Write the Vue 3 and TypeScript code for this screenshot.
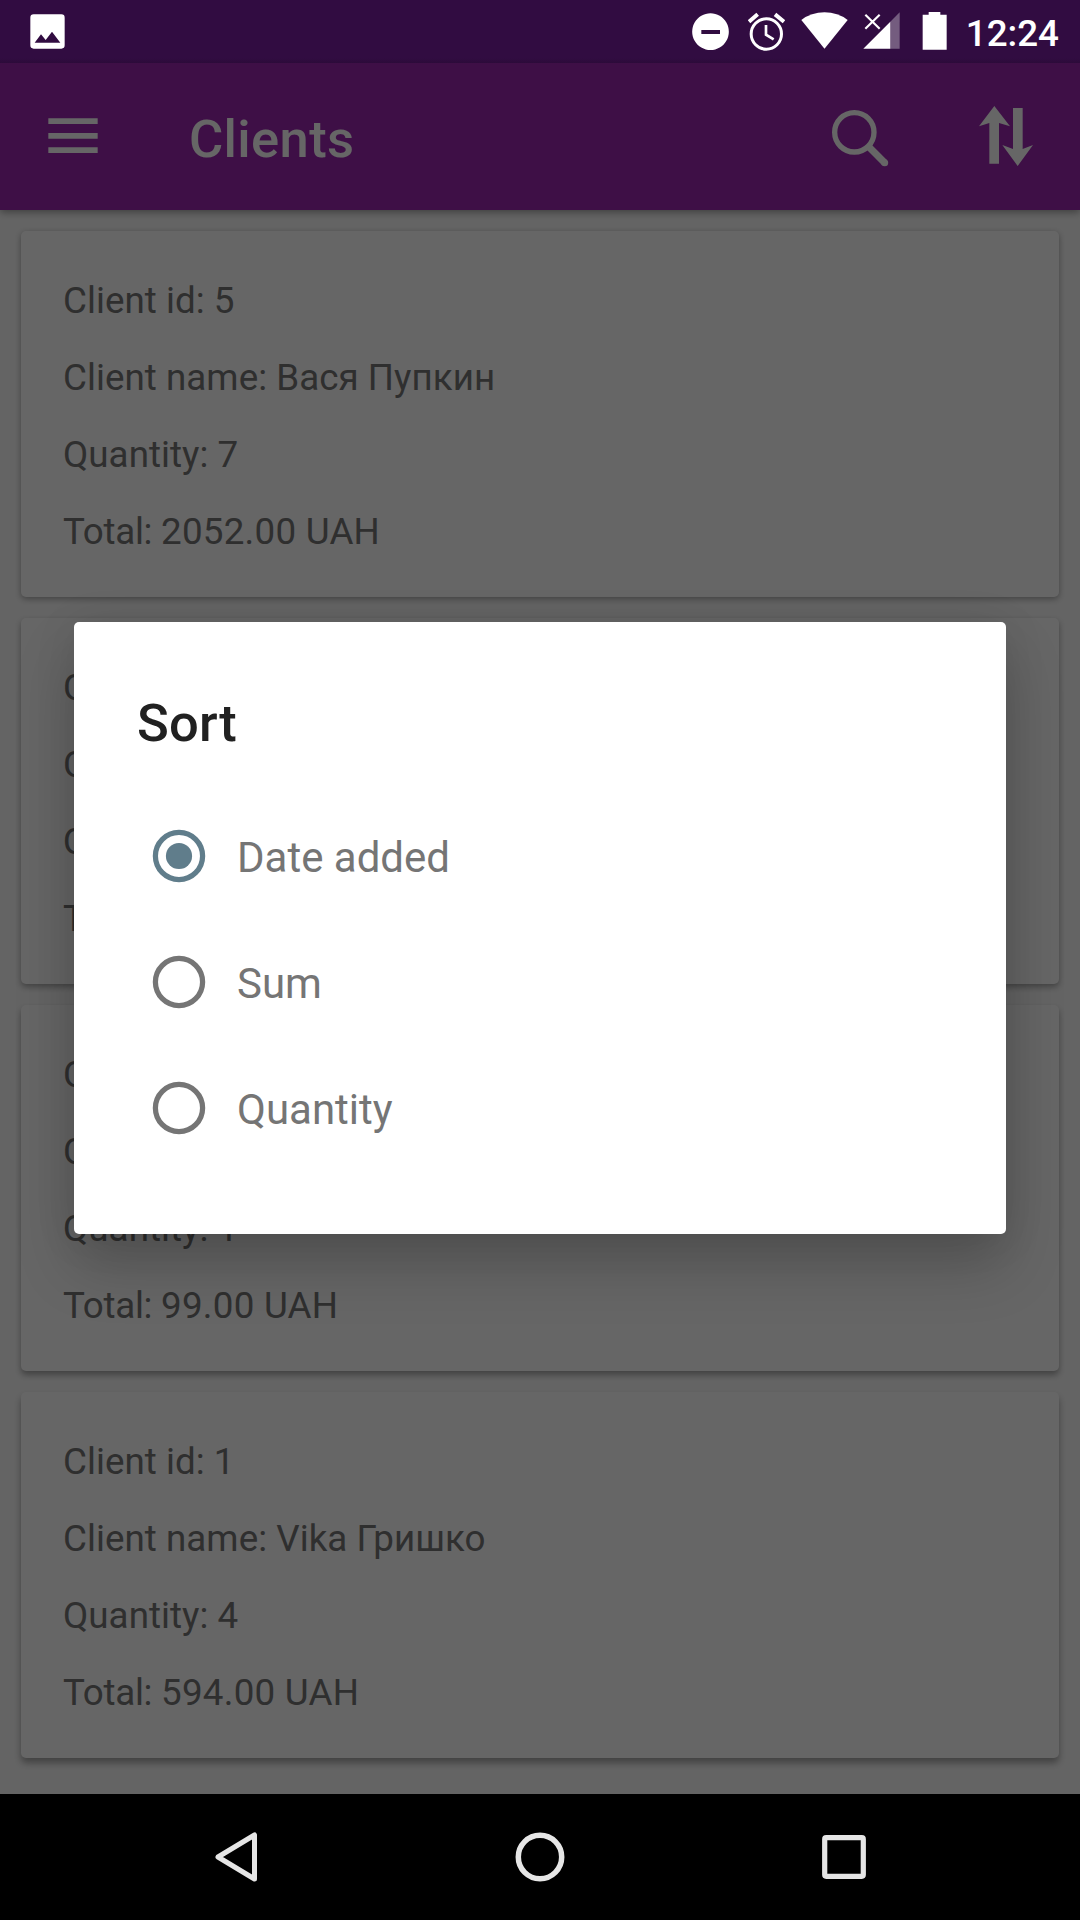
<script setup lang="ts">
import { ref } from 'vue'

interface Client {
  id: number
  name: string
  quantity: number
  total: string
}

const clients: Client[] = [
  { id: 5, name: 'Вася Пупкин', quantity: 7, total: '2052.00' },
  { id: 4, name: 'Client', quantity: 2, total: '198.00' },
  { id: 3, name: 'Client', quantity: 1, total: '99.00' },
  { id: 1, name: 'Vika Гришко', quantity: 4, total: '594.00' },
]

const sortOptions: string[] = ['Date added', 'Sum', 'Quantity']
const selected = ref('Date added')
</script>

<template>
  <div class="screen">
    <header class="status">
      <svg class="photo" width="35" height="35" viewBox="0 0 105 105">
        <path
          fill="#fff"
          fill-rule="evenodd"
          d="M11 1H94Q104 1 104 11V94Q104 104 94 104H11Q1 104 1 94V11Q1 1 11 1ZM14 86H91L66 53L47 78L33 61Z"
        />
      </svg>
      <div class="indicators">
        <svg width="37" height="38" viewBox="0 0 111 114">
          <path
            fill="#fff"
            fill-rule="evenodd"
            d="M55.500 1a55 55 0 1 0 .01 0ZM28 51H84V63H28Z"
          />
        </svg>
        <svg class="alarm" width="37" height="39" viewBox="0 0 111 117">
          <g fill="none" stroke="#fff">
            <circle cx="55" cy="66" r="45.500" stroke-width="9" />
            <path d="M54 39V68L77 82" stroke-width="8" />
            <path d="M3 29L29 7M81 7L108 29" stroke-width="12" />
          </g>
        </svg>
        <svg class="wifi" width="47" height="37" viewBox="0 0 141 111">
          <path fill="#fff" d="M1 24Q31 1 70.500 1T140 24L70.500 110Z" />
        </svg>
        <svg class="signal" width="37" height="37" viewBox="0 0 111 111">
          <path fill="#fff" fill-opacity=".33" d="M110 1V110H82V29Z" />
          <path fill="#fff" d="M82 29V110H1Z" />
          <path d="M7 8L50 50M50 8L7 50" fill="none" stroke="#fff" stroke-width="6.500" />
        </svg>
        <svg class="battery" width="25" height="38" viewBox="0 0 75 114">
          <path fill="#fff" d="M2 8H20V0H55V8H74V113H2Z" />
        </svg>
        <span class="clock">12:24</span>
      </div>
    </header>

    <div class="appbar">
      <svg width="50" height="37" viewBox="0 0 150 111">
        <path fill="#fff" d="M1 4H149V21H1ZM1 48H149V65H1ZM1 91H149V108H1Z" />
      </svg>
      <h1>Clients</h1>
      <svg class="search" width="57" height="57" viewBox="0 0 171 171">
        <g fill="none" stroke="#fff">
          <circle cx="67" cy="67" r="59" stroke-width="16" />
          <path d="M111 111L158 158" stroke-width="21" />
          <path d="M158 158h.1" stroke-width="21" stroke-linecap="round" />
        </g>
      </svg>
      <svg class="swap" width="54" height="60" viewBox="0 0 162 180">
        <path fill="#fff" d="M46 0L93 61L60 51V173H31V51L0 61Z" />
        <path fill="#fff" d="M116 180L162 117L131 129V6H102V129L70 117Z" />
      </svg>
    </div>

    <main class="list">
      <article v-for="(client, i) in clients" :key="client.id" class="card" :class="'depth-' + i">
        <p>Client id: {{ client.id }}</p>
        <p>Client name: {{ client.name }}</p>
        <p>Quantity: {{ client.quantity }}</p>
        <p><span class="label">Total: </span><span class="amount">{{ client.total }} UAH</span></p>
      </article>
    </main>

    <nav class="navbar">
      <svg class="back" width="43" height="50" viewBox="0 0 43 50">
        <path
          d="M3 25L39.500 3V47Z"
          fill="none"
          stroke="#e6e6e6"
          stroke-width="5"
          stroke-linejoin="round"
        />
      </svg>
      <svg width="50" height="50" viewBox="0 0 50 50">
        <circle cx="25" cy="25" r="21.700" fill="none" stroke="#e6e6e6" stroke-width="5.500" />
      </svg>
      <svg class="recents" width="44" height="44" viewBox="0 0 44 44">
        <rect
          x="2.700"
          y="2.700"
          width="38.600"
          height="38.600"
          rx="1.500"
          fill="none"
          stroke="#e6e6e6"
          stroke-width="5.200"
        />
      </svg>
    </nav>

    <div class="scrim">
      <section class="dialog" role="dialog">
        <h2>Sort</h2>
        <div
          v-for="option in sortOptions"
          :key="option"
          class="option"
          role="radio"
          :aria-checked="selected === option"
          @click="selected = option"
        >
          <svg
            width="54"
            height="54"
            viewBox="0 0 54 54"
            :class="{ checked: selected === option }"
          >
            <circle cx="27" cy="27" r="23.600" fill="none" stroke="currentColor" stroke-width="5.250" />
            <circle v-if="selected === option" cx="27" cy="27" r="13.100" fill="currentColor" />
          </svg>
          <span>{{ option }}</span>
        </div>
      </section>
    </div>
  </div>
</template>

<style>
body {
  margin: 0;
}
</style>

<style scoped>
.screen {
  position: relative;
  display: flex;
  flex-direction: column;
  width: 1080px;
  height: 1920px;
  overflow: hidden;
  background: #fafafa;
  font-family: Roboto, sans-serif;
}
svg {
  display: block;
  flex: none;
}
h1,
h2,
p {
  margin: 0;
}
.status {
  position: relative;
  z-index: 3;
  display: flex;
  flex: none;
  justify-content: space-between;
  box-sizing: border-box;
  height: 63px;
  padding: 0 21px 0 30px;
  background: linear-gradient(#310c41 58px, #2c0b3a);
}
.photo {
  margin-top: 14px;
}
.indicators {
  display: flex;
  align-items: flex-start;
  padding-top: 12px;
}
.indicators > svg:first-child {
  margin-top: 1px;
}
.alarm {
  margin-left: 19px;
}
.wifi {
  margin-left: 16px;
}
.signal {
  margin-left: 15px;
}
.battery {
  margin-left: 22px;
}
.clock {
  margin-left: 19px;
  color: #fff;
  font-size: 36.750px;
  font-weight: 500;
  line-height: 43px;
}
.appbar {
  position: relative;
  z-index: 1;
  display: flex;
  flex: none;
  align-items: flex-start;
  box-sizing: border-box;
  height: 147px;
  padding: 0 47px 0 48px;
  background: #9c27b0;
  box-shadow: 0 2px 8px rgba(0, 0, 0, 0.4);
}
.appbar > svg:first-child {
  margin-top: 54px;
}
.appbar h1 {
  flex: 1;
  margin: 45px 0 0 91px;
  color: #fff;
  font-size: 52.500px;
  font-weight: 500;
  letter-spacing: 0.35px;
  line-height: 62px;
}
.search {
  margin-top: 47px;
}
.swap {
  margin: 43px 0 0 90px;
}
.list {
  display: flex;
  flex: 1;
  flex-direction: column;
  gap: 21px;
  min-height: 0;
  padding: 21px;
}
.card {
  display: flex;
  flex: none;
  flex-direction: column;
  gap: 34px;
  box-sizing: border-box;
  height: 366px;
  padding: 48px 42px 0;
  border-radius: 5px;
  background: #fff;
  box-shadow: 0 2px 6px rgba(0, 0, 0, 0.34);
}
.depth-1 {
  box-shadow: 0 3px 6px rgba(0, 0, 0, 0.34);
}
.depth-2 {
  box-shadow: 0 4px 6px rgba(0, 0, 0, 0.34);
}
.depth-3 {
  box-shadow: 0 5px 7px rgba(0, 0, 0, 0.34);
}
.card p {
  color: #757575;
  font-size: 36.750px;
  letter-spacing: 0.04px;
  line-height: 43px;
}
.label {
  letter-spacing: -0.3px;
}
.amount {
  letter-spacing: 0.25px;
}
.navbar {
  position: relative;
  z-index: 3;
  display: flex;
  flex: none;
  align-items: center;
  justify-content: space-between;
  box-sizing: border-box;
  height: 126px;
  padding: 0 214px 0 215px;
  background: #000;
}
.scrim {
  position: absolute;
  z-index: 2;
  inset: 63px 0 126px;
  display: flex;
  align-items: center;
  justify-content: center;
  padding-bottom: 1px;
  background: rgba(0, 0, 0, 0.6);
}
.dialog {
  box-sizing: border-box;
  width: 932px;
  height: 612px;
  padding: 70px 63px 0;
  border-radius: 5px;
  background: #fff;
  box-shadow:
    0 32px 60px rgba(0, 0, 0, 0.2),
    0 4px 44px rgba(0, 0, 0, 0.09);
}
.dialog h2 {
  margin-bottom: 39px;
  color: #212121;
  font-size: 52.500px;
  font-weight: 500;
  letter-spacing: 0.25px;
  line-height: 62px;
}
.option {
  display: flex;
  align-items: center;
  gap: 31px;
  height: 126px;
  padding-left: 15px;
  color: #757575;
  font-size: 42px;
  line-height: 50px;
}
.option .checked {
  color: #607d8b;
}
.option span {
  position: relative;
  top: 2px;
}
</style>
